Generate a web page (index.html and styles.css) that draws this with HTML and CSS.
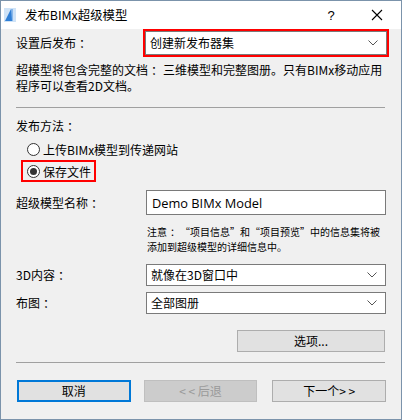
FILE: index.html
```html
<!DOCTYPE html>
<html lang="zh-CN">
<head>
<meta charset="utf-8">
<title>发布BIMx超级模型</title>
<link rel="stylesheet" href="styles.css">
</head>
<body>
<div class="window">
  <div class="titlebar">
    <svg class="app-icon" width="12" height="14" viewBox="0 0 12 14">
      <rect x="0" y="0" width="12" height="14" fill="#cfe3f7"/>
      <path d="M1 13 L7 1 L9 1 L9 13 Z" fill="#2f7fd6"/>
      <path d="M7 1 L9 1 L9 13 L8 13 Z" fill="#8ab8ea"/>
    </svg>
    <span class="title">发布BIMx超级模型</span>
    <span class="help">?</span>
    <svg class="close" width="12" height="12" viewBox="0 0 12 12">
      <path d="M1 1 L11 11 M11 1 L1 11" stroke="#000" stroke-width="1.1"/>
    </svg>
  </div>
  <div class="content">
    <div class="row row-first">
      <span class="label">设置后发布<span class="colon">：</span></span>
      <div class="red-box">
        <div class="select select-tall">
          <span>创建新发布器集</span>
          <svg class="chev" width="10" height="6" viewBox="0 0 10 6"><path d="M0.5 0.5 L5 5 L9.5 0.5" fill="none" stroke="#555" stroke-width="1"/></svg>
        </div>
      </div>
    </div>
    <p class="desc">超模型将包含完整的文档<span class="colon">：</span>三维模型和完整图册。只有BIMx移动应用<br>程序可以查看2D文档。</p>
    <div class="sep sep-1"></div>
    <div class="section-label">发布方法<span class="colon">：</span></div>
    <div class="radio-row">
      <span class="radio"></span><span>上传BIMx模型到传递网站</span>
    </div>
    <div class="radio-row radio-marked">
      <span class="radio checked"></span><span>保存文件</span>
    </div>
    <div class="row row-name">
      <span class="label">超级模型名称<span class="colon">：</span></span>
      <div class="input">Demo BIMx Model</div>
    </div>
    <p class="note">注意<span class="colon">：</span>“项目信息”和“项目预览”中的信息集将被<br>添加到超级模型的详细信息中。</p>
    <div class="row row-3d">
      <span class="label">3D内容<span class="colon">：</span></span>
      <div class="select">
        <span>就像在3D窗口中</span>
        <svg class="chev" width="10" height="6" viewBox="0 0 10 6"><path d="M0.5 0.5 L5 5 L9.5 0.5" fill="none" stroke="#555" stroke-width="1"/></svg>
      </div>
    </div>
    <div class="row row-layout">
      <span class="label">布图<span class="colon">：</span></span>
      <div class="select">
        <span>全部图册</span>
        <svg class="chev" width="10" height="6" viewBox="0 0 10 6"><path d="M0.5 0.5 L5 5 L9.5 0.5" fill="none" stroke="#555" stroke-width="1"/></svg>
      </div>
    </div>
    <div class="options-row">
      <div class="btn btn-options">选项...</div>
    </div>
    <div class="sep sep-2"></div>
    <div class="footer">
      <div class="btn btn-cancel">取消</div>
      <div class="btn btn-disabled">&lt; &lt; 后退</div>
      <div class="btn btn-next">下一个&gt; &gt;</div>
    </div>
  </div>
</div>
</body>
</html>
```
FILE: styles.css
```css
* { box-sizing: border-box; }
html, body { margin: 0; padding: 0; }
body {
  font-family: "Noto Sans CJK SC", "Noto Sans", sans-serif;
  font-size: 12px;
  color: #000;
  background: #f0f0f0;
}
.window {
  width: 402px;
  height: 420px;
  border: 1px solid #7b93ab;
  background: #f0f0f0;
  display: flex;
  flex-direction: column;
}
.titlebar {
  height: 28px;
  background: #fff;
  display: flex;
  align-items: center;
  padding-left: 3px;
  flex-shrink: 0;
}
.title {
  margin-left: 9px;
  line-height: 16px;
  font-size: 12.4px;
}
.help {
  margin-left: auto;
  width: 12px;
  text-align: center;
  font-family: "Liberation Sans", sans-serif;
  font-size: 13px;
}
.close {
  margin-left: 34px;
  margin-right: 18px;
}
.colon {
  display: inline-block;
  padding-left: 3px;
}
.content {
  padding: 0 15px 0 15px;
  display: flex;
  flex-direction: column;
}
.row {
  display: grid;
  grid-template-columns: 130px 240px;
  align-items: center;
}
.label { line-height: 16px; }
.red-box {
  margin-left: -3px;
  width: 246px;
  border: 2px solid #ff0000;
  padding: 0;
}
.select {
  height: 22px;
  background: #fff;
  border: 1px solid #7a7a7a;
  display: flex;
  align-items: center;
  padding-left: 4px;
  padding-right: 8px;
  line-height: 16px;
}
.select-tall {
  height: 24px;
  padding-left: 4px;
  background: #fff;
}
.chev { margin-left: auto; }
.desc {
  margin: 5px 0 0 0;
  line-height: 16px;
  white-space: nowrap;
}
.sep {
  height: 1px;
  background: #a0a0a0;
  width: 369px;
}
.sep-1 { margin-top: 13px; }
.section-label {
  margin-top: 10px;
  line-height: 16px;
}
.radio-row {
  margin-left: 5px;
  width: 75px;
  height: 22px;
  border: 2px solid transparent;
  display: flex;
  align-items: center;
  padding-left: 4px;
  white-space: nowrap;
}
.section-label + .radio-row { margin-top: 4px; }
.radio-marked { border-color: #ff0000; }
.radio {
  width: 13px;
  height: 13px;
  border-radius: 50%;
  border: 1px solid #333;
  background: #fff;
  margin-right: 3px;
  flex-shrink: 0;
  display: flex;
  align-items: center;
  justify-content: center;
}
.radio.checked::after {
  content: "";
  width: 7px;
  height: 7px;
  border-radius: 50%;
  background: #333;
}
.row-name { margin-top: 8px; }
.input {
  height: 25px;
  background: #fff;
  border: 1px solid #7a7a7a;
  padding-left: 5px;
  display: flex;
  align-items: center;
  font-family: "Open Sans", "Noto Sans", sans-serif;
  font-size: 12.8px;
}
.note {
  margin: 9px 0 0 131px;
  font-size: 10px;
  line-height: 15px;
  white-space: nowrap;
}
.row-3d { margin-top: 10px; }
.row-layout { margin-top: 6px; }
.options-row {
  margin-top: 16px;
  display: flex;
  justify-content: flex-end;
  padding-right: 1px;
}
.btn {
  height: 22px;
  background: #e1e1e1;
  border: 1px solid #adadad;
  display: flex;
  align-items: center;
  justify-content: center;
  line-height: 16px;
}
.btn-options { width: 148px; height: 22px; }
.sep-2 { margin-top: 10px; }
.footer {
  margin-top: 17px;
  display: flex;
  padding-left: 1px;
}
.btn-cancel {
  width: 114px;
  border: 2px solid #0078d7;
}
.btn-disabled {
  width: 114px;
  margin-left: 13px;
  background: #cccccc;
  border-color: #bfbfbf;
  color: #9a9a9a;
}
.btn-next {
  width: 114px;
  margin-left: 15px;
}
```
